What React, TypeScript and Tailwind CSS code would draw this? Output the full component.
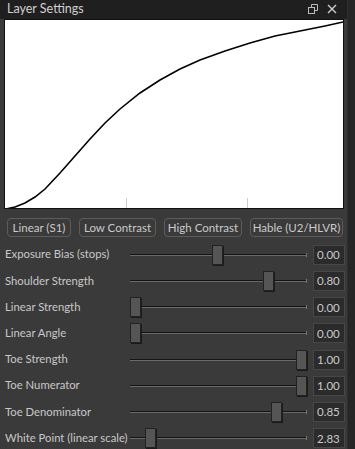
import React from 'react'

const rows = [
  { label: 'Exposure Bias (stops)', value: '0.00', thumb: 82 },
  { label: 'Shoulder Strength', value: '0.80', thumb: 133 },
  { label: 'Linear Strength', value: '0.00', thumb: 0 },
  { label: 'Linear Angle', value: '0.00', thumb: 0 },
  { label: 'Toe Strength', value: '1.00', thumb: 166 },
  { label: 'Toe Numerator', value: '1.00', thumb: 166 },
  { label: 'Toe Denominator', value: '0.85', thumb: 141 },
  { label: 'White Point (linear scale)', value: '2.83', thumb: 15 },
]

const presets = [
  { label: 'Linear (S1)', w: 'w-[64px]' },
  { label: 'Low Contrast', w: 'w-[77px]' },
  { label: 'High Contrast', w: 'w-[78px]' },
  { label: 'Hable (U2/HLVR)', w: 'w-[93px]' },
]

// curve sampled by eye from the reference, graph-local coords
const pts: [number, number][] = [
  [6, 208], [15, 206], [25, 202], [35, 196], [45, 188], [60, 172], [75, 155],
  [90, 138], [105, 122], [120, 108], [140, 92], [160, 79], [180, 68], [200, 59],
  [225, 50], [250, 42], [275, 35], [300, 30], [325, 25], [343, 21],
]
const curve = pts.map(([x, y], i) => `${i ? 'L' : 'M'}${x - 5} ${y - 19}`).join(' ')

function Slider({ thumb }: { thumb: number }) {
  return (
    <div className="relative w-[177px] h-[20px] shrink-0">
      <div className="absolute left-0 right-[1px] top-[9px] h-[1px] bg-[#141414]" />
      <div className="absolute left-0 right-[1px] top-[10px] h-[1px] bg-[#6a6a6a]" />
      <div className="absolute right-0 top-[8px] w-[1px] h-[4px] bg-[#777]" />
      <div
        className="absolute top-0 w-[11px] h-[20px] bg-[#555] border border-[#222] shadow-[1px_1px_0_#1a1a1a]"
        style={{ left: thumb }}
      />
    </div>
  )
}

export default function App() {
  return (
    <div
      className="w-[355px] h-[449px] flex bg-[#1e1e1e] overflow-hidden text-[#c8c8c8]"
      style={{ fontFamily: 'Lato, "Liberation Sans", Arial, sans-serif' }}
    >
      <div className="w-[347px] flex flex-col bg-[#3a3a3a]">
        <div className="h-[19px] bg-[#1f1f1f] flex items-center pl-[7px] pr-[10px] text-[12.5px] text-[#d0d0d0]">
          <span className="flex-1">Layer Settings</span>
          <svg width="10" height="10" viewBox="0 0 10 10" className="mr-[9px]">
            <rect x="0.5" y="3.5" width="6" height="6" fill="none" stroke="#bbb" />
            <path d="M3.5 3.5V0.5h6v6h-3" fill="none" stroke="#bbb" />
          </svg>
          <svg width="10" height="10" viewBox="0 0 10 10">
            <path d="M1 1L9 9M9 1L1 9" stroke="#ccc" strokeWidth="1.4" />
          </svg>
        </div>
        <div className="ml-[4px] w-[340px] h-[190px] bg-white border border-[#111] shrink-0">
          <svg width="338" height="188" viewBox="0 0 338 188">
            <line x1="121.5" y1="178" x2="121.5" y2="188" stroke="#ccc" />
            <line x1="242.5" y1="178" x2="242.5" y2="188" stroke="#ccc" />
            <path d={curve} fill="none" stroke="#000" strokeWidth="1.6" />
          </svg>
        </div>
        <div className="flex gap-[8px] pl-[7px] mt-[9px]">
          {presets.map(p => (
            <div
              key={p.label}
              className={`${p.w} shrink-0 h-[19px] flex items-center justify-center whitespace-nowrap rounded-[4px] border border-[#5c5c5c] text-[11.5px] text-[#cacaca] bg-[#3a3a3a]`}
            >
              {p.label}
            </div>
          ))}
        </div>
        <div className="flex flex-col mt-[5px]">
          {rows.map(r => (
            <div key={r.label} className="h-[26.2px] flex items-center pl-[5px]">
              <span className="w-[125px] text-[11.3px] whitespace-nowrap">{r.label}</span>
              <Slider thumb={r.thumb} />
              <div className="ml-[6px] w-[32px] h-[20px] bg-[#2b2b2b] border border-[#474747] text-[11.5px] pl-[3px] flex items-center">
                {r.value}
              </div>
            </div>
          ))}
        </div>
      </div>
      <div className="flex-1 border-l border-[#2e2e2e] bg-[#262626]" />
    </div>
  )
}
